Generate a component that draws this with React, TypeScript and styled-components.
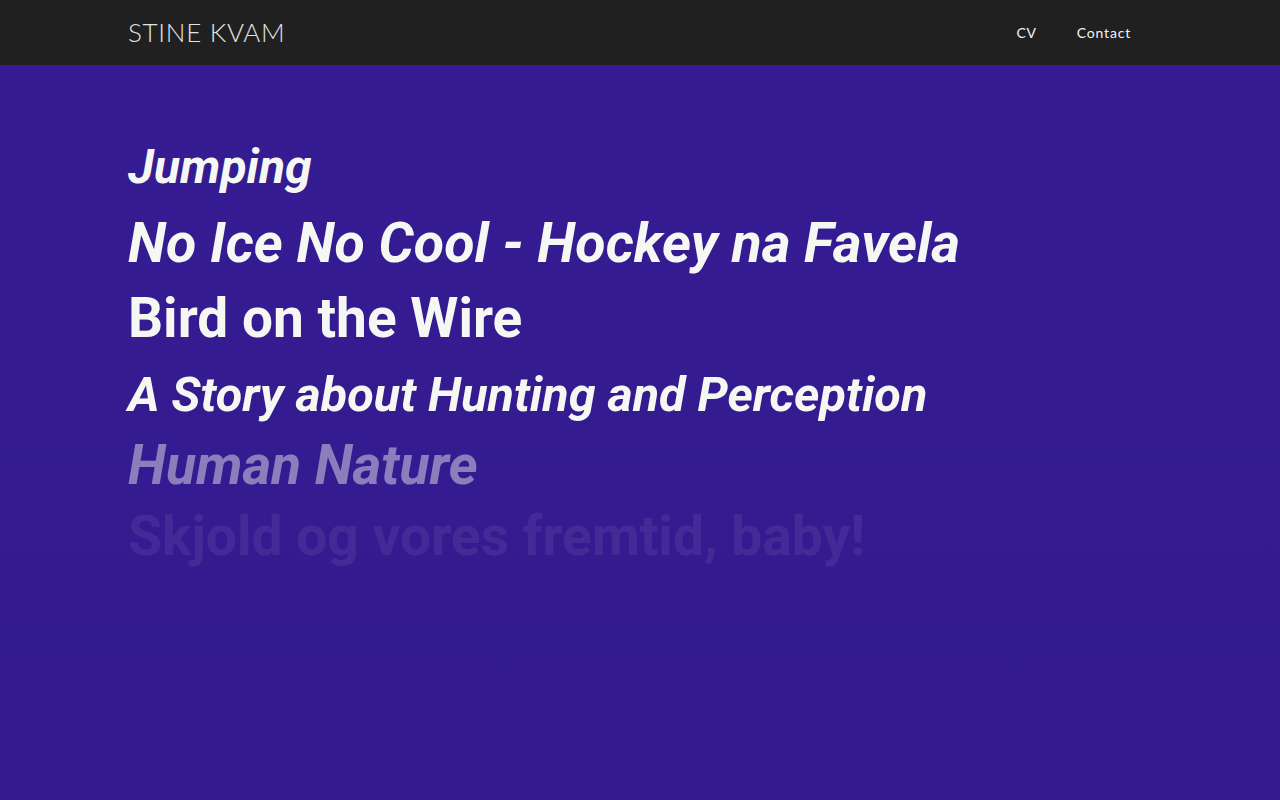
import React from 'react';
import styled, { createGlobalStyle } from 'styled-components';

const GlobalStyle = createGlobalStyle`
    html, body {
        margin: 0;
        padding: 0;
        min-height: 100%;
    }
    body {
        background: #341b91;
        font-family: Roboto, "Noto Sans", sans-serif;
    }
`;

interface Project {
    title: string;
    size: number;
    lineHeight: number;
    italic: boolean;
    fade: number;
};

// sizes and fades are the state of the list's scroll animation
const projects: Project[] = [
    { title: 'Jumping', size: 48, lineHeight: 78, italic: true, fade: 1 },
    { title: 'No Ice No Cool - Hockey na Favela', size: 55.5, lineHeight: 76, italic: true, fade: 1 },
    { title: 'Bird on the Wire', size: 55, lineHeight: 73, italic: false, fade: 1 },
    { title: 'A Story about Hunting and Perception', size: 48.5, lineHeight: 79, italic: true, fade: 1 },
    { title: 'Human Nature', size: 55.3, lineHeight: 64, italic: true, fade: 0.45 },
    { title: 'Skjold og vores fremtid, baby!', size: 55.15, lineHeight: 76, italic: false, fade: 0.07 },
];

function App() {
    return (
        <Page>
            <GlobalStyle />
            <Header>
                <Bar>
                    <Logo href="#">STINE KVAM</Logo>
                    <Nav>
                        <NavLink href="#">CV</NavLink>
                        <NavLink href="#">Contact</NavLink>
                    </Nav>
                </Bar>
            </Header>
            <Main>
                <List>
                    {projects.map((p) => {
                        return (
                            <Item key={p.title} $lineHeight={p.lineHeight}>
                                <Title href="#" $size={p.size} $italic={p.italic} $fade={p.fade}>
                                    {p.title}
                                </Title>
                            </Item>
                        );
                    })}
                </List>
            </Main>
        </Page>
    );
}

const Page = styled.div`
    min-height: 800px;
    display: flex;
    flex-direction: column;
    background: linear-gradient(180deg, #361c93 0%, #321a8e 100%);
`;

const Header = styled.header`
    height: 65px;
    background: #202020;
`;

const Bar = styled.div`
    width: 1024px;
    height: 100%;
    margin: 0 auto;
    display: flex;
    align-items: center;
    justify-content: space-between;
`;

const Logo = styled.a`
    font-family: Lato, "Open Sans", sans-serif;
    font-weight: 300;
    font-size: 26px;
    letter-spacing: 0.7px;
    color: #e2e2e2;
    text-decoration: none;
    margin-bottom: 2px;
`;

const Nav = styled.nav`
    display: flex;
    align-items: center;
    gap: 40px;
    margin-right: 21px;
`;

const NavLink = styled.a`
    font-family: Lato, "Open Sans", sans-serif;
    font-size: 14px;
    font-weight: 400;
    letter-spacing: 0.8px;
    color: #f4f4f4;
    text-decoration: none;
`;

const Main = styled.main`
    flex: 1;
    padding-top: 63px;
`;

const List = styled.ul`
    width: 1024px;
    margin: 0 auto;
    padding: 0;
    list-style: none;
`;

const Item = styled.li<{ $lineHeight: number }>`
    margin: 0;
    height: ${(props) => props.$lineHeight}px;
    line-height: ${(props) => props.$lineHeight}px;
`;

const Title = styled.a<{ $size: number; $italic: boolean; $fade: number }>`
    font-family: Roboto, sans-serif;
    font-weight: 700;
    font-size: ${(props) => props.$size}px;
    font-style: ${(props) => (props.$italic ? 'italic' : 'normal')};
    color: #f5f7f2;
    opacity: ${(props) => props.$fade};
    text-decoration: none;
    white-space: nowrap;
`;

export default App;
